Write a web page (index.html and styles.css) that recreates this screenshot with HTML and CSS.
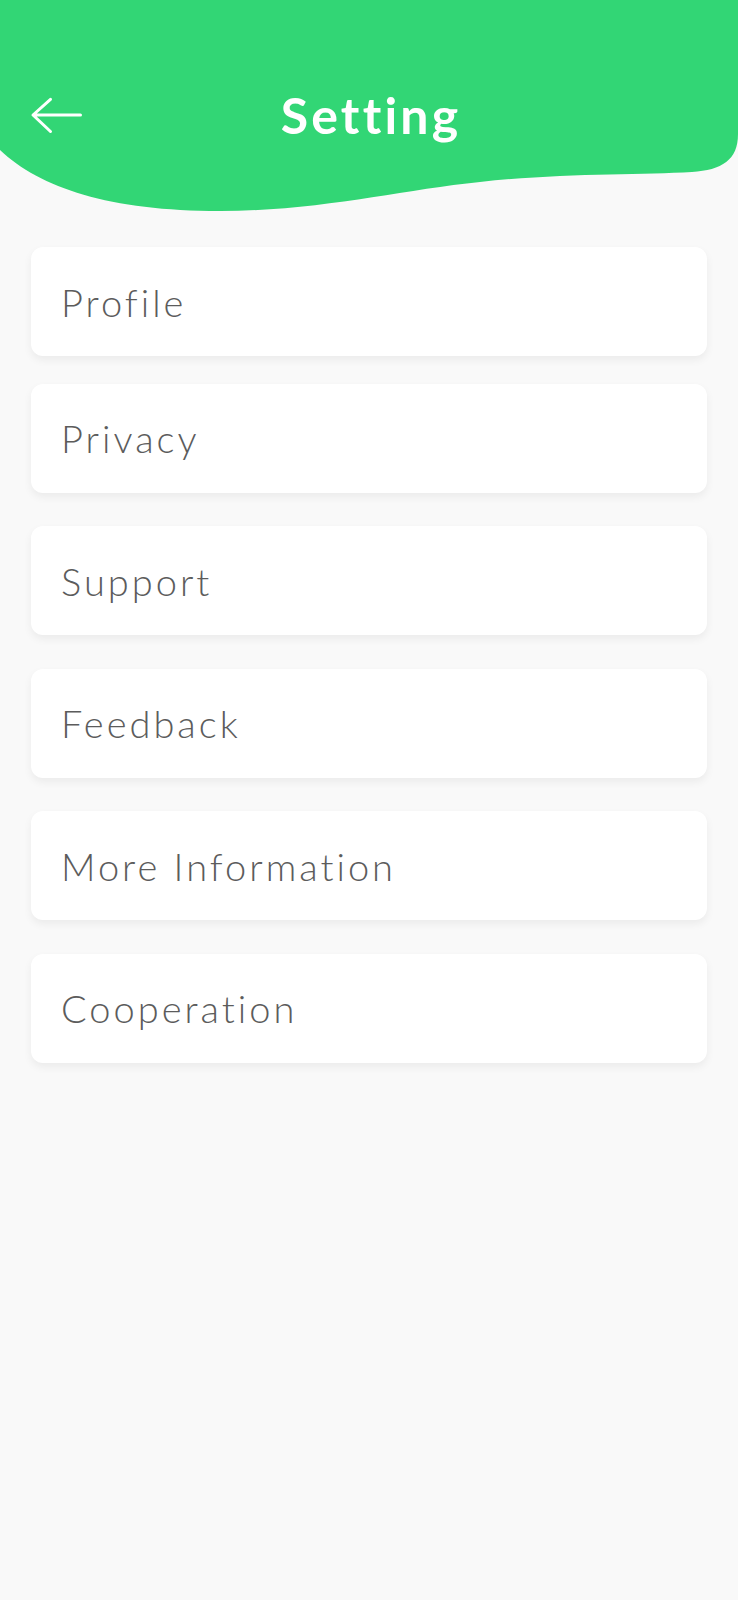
FILE: index.html
```html
<!DOCTYPE html>
<html lang="en">
<head>
<meta charset="utf-8">
<title>Setting</title>
<link rel="stylesheet" href="styles.css">
</head>
<body>
<header class="header">
  <svg class="wave" viewBox="0 0 738 212" preserveAspectRatio="none" aria-hidden="true">
    <path d="M0 0 H738 V134 C738 160 722 170 692 172 C 640 175 560 173 480 182 C 400 190 320 211 220 211 C 110 211 40 188 0 150 Z" fill="#32d675"/>
  </svg>
  <div class="bar">
    <button class="back" aria-label="Back">
      <svg width="52" height="38" viewBox="0 0 52 38" aria-hidden="true">
        <path d="M50.5 19 H3.5 M20.5 3.3 L3 19 L20.5 35.5" fill="none" stroke="#fff" stroke-width="3" stroke-linecap="round" stroke-linejoin="round"/>
      </svg>
    </button>
    <h1 class="title">Setting</h1>
  </div>
</header>
<main class="list">
  <div class="item item-first">Profile</div>
  <div class="item">Privacy</div>
  <div class="item">Support</div>
  <div class="item">Feedback</div>
  <div class="item">More Information</div>
  <div class="item">Cooperation</div>
</main>
</body>
</html>
```
FILE: styles.css
```css
html, body {
  margin: 0;
  padding: 0;
}
body {
  background: #f9f9f9;
  font-family: Lato, "Open Sans", "Liberation Sans", sans-serif;
  min-height: 1600px;
}
.header {
  position: relative;
  height: 212px;
}
.wave {
  position: absolute;
  left: 0;
  top: 0;
  width: 100%;
  height: 100%;
  display: block;
}
.bar {
  position: relative;
  display: flex;
  align-items: center;
  justify-content: center;
  height: 50px;
  padding-top: 90px;
}
.back {
  position: absolute;
  left: 30px;
  top: 96px;
  width: 52px;
  height: 38px;
  padding: 0;
  border: 0;
  background: transparent;
  display: block;
}
.back svg {
  display: block;
}
.title {
  margin: 0;
  padding-left: 4px;
  color: #fff;
  font-size: 50px;
  font-weight: 700;
  letter-spacing: 3.2px;
  line-height: 50px;
}
.list {
  display: flex;
  flex-direction: column;
  gap: 33.5px;
  padding: 35px 31px 0 31px;
}
.item {
  height: 109px;
  box-sizing: border-box;
  display: flex;
  align-items: center;
  padding-left: 30px;
  background: #fff;
  border-radius: 12px;
  box-shadow: 0 4px 8px rgba(0, 0, 0, 0.06);
  color: #5c5c5c;
  font-size: 38px;
  font-weight: 300;
  letter-spacing: 3px;
}
.item-first {
  margin-bottom: -6px;
}
```
